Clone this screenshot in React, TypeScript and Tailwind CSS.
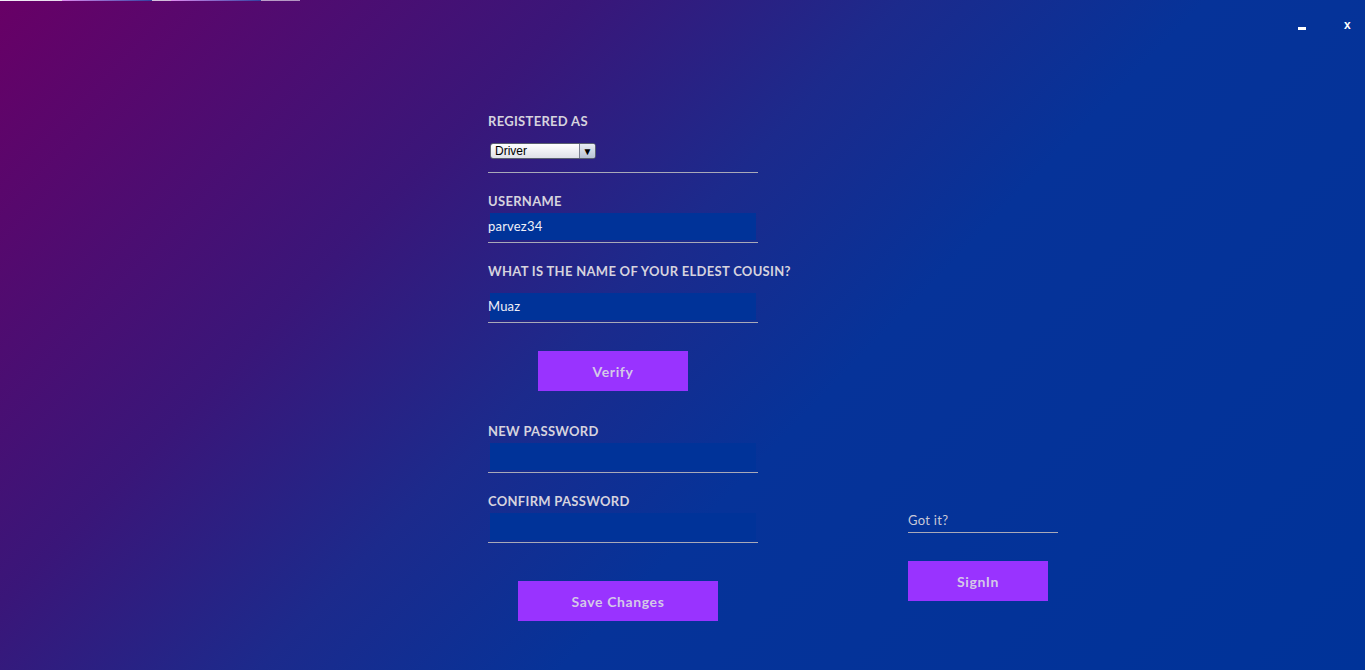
import React from "react";

const labelCls =
  "h-[16px] leading-[16px] text-[13px] font-bold uppercase text-[#d6d3de] tracking-[0.3px] whitespace-nowrap";
const font = { fontFamily: "Lato, 'Open Sans', sans-serif" };
const btnCls =
  "h-[40px] pt-[1px] bg-[#9933ff] text-[14px] font-bold text-[#d4c8e8] tracking-[0.6px]";

function Field({ value }: { value?: string }) {
  return (
    <>
      <div className="mt-[4px] ml-[2px] h-[27px] w-[266px] bg-[#003399] flex items-center">
        <span className="-ml-[2px] text-[13px] text-[#f0f0f8] tracking-[0.2px]">{value}</span>
      </div>
      <div className="mt-[2px] h-px w-[270px] bg-[#a9a9b8]" />
    </>
  );
}

export default function App() {
  return (
    <div
      className="relative w-[1365px] h-[670px] overflow-hidden"
      style={{
        ...font,
        background:
          "linear-gradient(134deg, #680066 0%, #3a1679 29%, #1c2a8c 45%, #063399 60%, #003399 100%)",
      }}
    >
      {/* top edge strip */}
      <div className="absolute left-0 top-0 h-px w-[300px] bg-gradient-to-r from-[#f4f0f8] to-[#f4f0f8]/60" />
      <div className="absolute left-[62px] top-0 h-px w-[90px] bg-gradient-to-r from-[#e08cf0] to-[#3040a0]" />
      <div className="absolute left-[171px] top-0 h-px w-[90px] bg-gradient-to-r from-[#e08cf0] to-[#3040a0]" />

      {/* window controls */}
      <div className="absolute left-[1298px] top-[27px] h-[3px] w-[8px] bg-white" />
      <div
        className="absolute left-[1344px] top-[17px] text-[12px] font-bold text-white leading-[16px]"
        style={{ fontFamily: "'Liberation Sans', sans-serif" }}
      >
        x
      </div>

      <div className="flex pl-[488px]">
        {/* form column */}
        <div className="flex flex-col w-[270px] pt-[113px]">
          <div className={labelCls}>Registered As</div>
          <div className="mt-[14px] ml-[2px] h-[16px] w-[106px] rounded-[3px] border border-[#5a6070] bg-gradient-to-b from-white to-[#dfe1e8] flex items-stretch overflow-hidden">
            <span
              className="flex-1 pl-[4px] text-[12px] leading-[14px] text-black"
              style={{ fontFamily: "'Liberation Sans', Arial, sans-serif" }}
            >
              Driver
            </span>
            <span className="w-[16px] border-l border-[#7a8090] bg-gradient-to-b from-[#e8ecf4] to-[#b8c2d4] flex items-center justify-center text-[10px] text-black leading-none">
              ▼
            </span>
          </div>
          <div className="mt-[13px] h-px w-[270px] bg-[#a9a9b8]" />

          <div className={`${labelCls} mt-[20px]`}>Username</div>
          <Field value="parvez34" />

          <div className={`${labelCls} mt-[20px]`}>What is the name of your eldest cousin?</div>
          <div className="mt-[10px]" />
          <Field value="Muaz" />

          <button className={`${btnCls} mt-[28px] ml-[50px] w-[150px]`}>Verify</button>

          <div className={`${labelCls} mt-[32px]`}>New Password</div>
          <Field />

          <div className={`${labelCls} mt-[20px]`}>Confirm Password</div>
          <Field />

          <button className={`${btnCls} mt-[38px] ml-[30px] w-[200px]`}>Save Changes</button>
        </div>

        {/* right column */}
        <div className="ml-[150px] flex flex-col pt-[512px]">
          <div className="h-[16px] leading-[16px] text-[13px] text-[#c8c8d8] tracking-[0.3px]">Got it?</div>
          <div className="mt-[4px] h-px w-[150px] bg-[#a9a9b8]" />
          <button className={`${btnCls} mt-[28px] w-[140px]`}>SignIn</button>
        </div>
      </div>
    </div>
  );
}
